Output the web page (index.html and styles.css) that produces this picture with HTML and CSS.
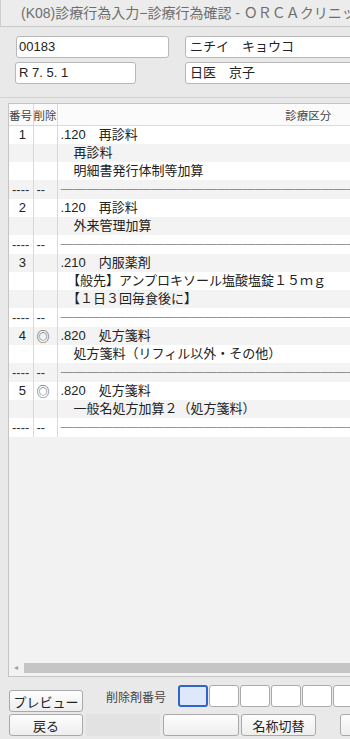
FILE: index.html
```html
<!DOCTYPE html>
<html>
<head>
    <title>診療行為確認</title>
    <link rel="stylesheet" href="styles.css">
</head>
<body>
    <div class="titlebar">(K08)診療行為入力−診療行為確認 - ＯＲＣＡクリニック</div>

    <div class="patient">
        <div class="field field-id">00183</div>
        <div class="field field-wide">ニチイ　キョウコ</div>
        <div class="field field-date">R 7. 5. 1</div>
        <div class="field field-wide">日医　京子</div>
    </div>

    <div class="list-pane">
        <div class="list-scroll">
            <table class="list">
                <colgroup>
                    <col class="c-no">
                    <col class="c-del">
                    <col class="c-body">
                </colgroup>
                <thead>
                    <tr>
                        <th class="h-left">番号</th>
                        <th class="h-left">削除</th>
                        <th>診療区分</th>
                    </tr>
                </thead>
                <tbody>
                    <tr><td class="no">1</td><td></td><td>.120　再診料</td></tr>
                    <tr><td></td><td></td><td>　再診料</td></tr>
                    <tr><td></td><td></td><td>　明細書発行体制等加算</td></tr>
                    <tr class="sep"><td>----</td><td>--</td><td><span class="rule">──────────────────────────────────────</span></td></tr>
                    <tr><td class="no">2</td><td></td><td>.120　再診料</td></tr>
                    <tr><td></td><td></td><td>　外来管理加算</td></tr>
                    <tr class="sep"><td>----</td><td>--</td><td><span class="rule">──────────────────────────────────────</span></td></tr>
                    <tr><td class="no">3</td><td></td><td>.210　内服薬剤</td></tr>
                    <tr><td></td><td></td><td>　【般先】アンプロキソール塩酸塩錠１５ｍｇ</td></tr>
                    <tr><td></td><td></td><td>　【１日３回毎食後に】</td></tr>
                    <tr class="sep"><td>----</td><td>--</td><td><span class="rule">──────────────────────────────────────</span></td></tr>
                    <tr><td class="no">4</td><td class="mark">◎</td><td>.820　処方箋料</td></tr>
                    <tr><td></td><td></td><td>　処方箋料（リフィル以外・その他）</td></tr>
                    <tr class="sep"><td>----</td><td>--</td><td><span class="rule">──────────────────────────────────────</span></td></tr>
                    <tr><td class="no">5</td><td class="mark">◎</td><td>.820　処方箋料</td></tr>
                    <tr><td></td><td></td><td>　一般名処方加算２（処方箋料）</td></tr>
                    <tr class="sep"><td>----</td><td>--</td><td><span class="rule">──────────────────────────────────────</span></td></tr>
                </tbody>
            </table>
        </div>
        <div class="hscroll">
            <span class="hscroll-arrow">◂</span>
            <span class="hscroll-thumb"></span>
        </div>
    </div>

    <div class="actions">
        <div class="action-row">
            <button class="btn btn-preview">プレビュー</button>
            <span class="del-label">削除剤番号</span>
            <div class="del-boxes">
                <div class="del-box active"></div>
                <div class="del-box"></div>
                <div class="del-box"></div>
                <div class="del-box"></div>
                <div class="del-box"></div>
                <div class="del-box"></div>
            </div>
        </div>
        <div class="action-row">
            <button class="btn">戻る</button>
            <div class="btn-blank"></div>
            <button class="btn btn-w76"></button>
            <button class="btn btn-w75">名称切替</button>
            <button class="btn btn-far"></button>
        </div>
    </div>
</body>
</html>
```

FILE: styles.css
```css
html, body {
    margin: 0;
    padding: 0;
}

body {
    width: 350px;
    height: 739px;
    overflow: hidden;
    background-color: #e9e9e9;
    font-family: "Liberation Sans", "Noto Sans CJK JP", sans-serif;
    font-size: 13px;
    color: #222;
}

/* window title */
.titlebar {
    height: 26px;
    line-height: 26px;
    padding-left: 20px;
    border-left: 1px solid #cfcfcf;
    border-bottom: 1px solid #c9c9c9;
    background-color: #ececec;
    color: #6e6e6e;
    font-size: 14px;
    white-space: nowrap;
    overflow: hidden;
}

/* patient info */
.patient {
    display: grid;
    grid-template-columns: 170px 190px;
    row-gap: 4px;
    padding: 9px 0 13px 15px;
    border-bottom: 1px solid #d2d2d2;
}

.field {
    box-sizing: border-box;
    height: 22px;
    line-height: 20px;
    padding-left: 3px;
    background-color: #fff;
    border: 1px solid #b8b8b8;
    border-radius: 3px;
    white-space: nowrap;
    overflow: hidden;
}

.field-id {
    width: 153px;
    margin-left: 1px;
    padding-left: 2px;
}

.field-date {
    width: 121px;
}

.field-wide {
    width: 190px;
    padding-left: 4px;
}

/* list */
.list-pane {
    display: flex;
    flex-direction: column;
    box-sizing: border-box;
    height: 574px;
    margin: 5px 0 0 8px;
    border: 1px solid #c4c4c4;
    border-right: none;
    background-color: #f2f2f2;
    overflow: hidden;
}

.list-scroll {
    flex: 1;
    overflow: hidden;
}

.list {
    table-layout: fixed;
    width: 550px;
    border-collapse: collapse;
}

.c-no { width: 24px; }
.c-del { width: 24px; }
.c-body { width: 502px; }

.list th {
    height: 21px;
    padding: 0;
    background-color: #fbfbfb;
    border-bottom: 1px solid #dadada;
    color: #444;
    font-size: 11.5px;
    font-weight: normal;
    text-align: center;
}

.list th.h-left {
    text-align: left;
    border-right: 1px solid #dadada;
}

.list td {
    height: 18px;
    padding: 0 0 0 3px;
    line-height: 18px;
    white-space: nowrap;
    overflow: hidden;
    vertical-align: middle;
}

.list td:nth-child(1),
.list td:nth-child(2) {
    border-right: 1px solid #d8d8d8;
}

.list tbody tr:nth-child(odd) td {
    background-color: #fff;
}

.list tbody tr:nth-child(even) td {
    background-color: #f3f3f3;
}

.list td.no {
    text-align: center;
}

.list td.mark {
    color: #444;
    font-family: "Noto Sans CJK JP", sans-serif;
    font-size: 13px;
}

.sep td {
    color: #333;
}

.rule {
    font-family: "Noto Sans CJK JP", sans-serif;
    font-weight: bold;
    color: #444;
}

/* horizontal scrollbar */
.hscroll {
    display: flex;
    align-items: center;
    height: 10px;
    margin-bottom: 3px;
}

.hscroll-arrow {
    width: 15px;
    padding-left: 5px;
    box-sizing: border-box;
    color: #a0a0a0;
    font-size: 8px;
    line-height: 10px;
}

.hscroll-thumb {
    flex: 1;
    height: 10px;
    background-color: #c5c5c5;
}

/* bottom buttons */
.actions {
    padding: 8px 0 0 9px;
}

.action-row {
    display: flex;
    align-items: flex-start;
    white-space: nowrap;
}

.action-row + .action-row {
    margin-top: 2px;
}

.btn {
    box-sizing: border-box;
    flex: none;
    width: 74px;
    height: 22px;
    margin: 0 3px 0 0;
    padding: 0;
    border: 1px solid #a9a9a9;
    border-radius: 3px;
    background: linear-gradient(#fdfdfd, #eeeeee);
    font-family: "Liberation Sans", "Noto Sans CJK JP", sans-serif;
    font-size: 13px;
    color: #222;
}

.btn-preview {
    margin-top: 5px;
}

.btn-blank {
    flex: none;
    width: 74px;
    height: 22px;
    margin-right: 3px;
    background-color: #e2e2e2;
}

.btn-w76 {
    width: 76px;
    margin-right: 2px;
}

.btn-w75 {
    width: 75px;
    margin-right: 24px;
}

.del-label {
    flex: none;
    width: 60px;
    margin: 2px 12px 0 20px;
    line-height: 22px;
    font-size: 12px;
    color: #444;
}

.del-boxes {
    display: flex;
    gap: 1px;
}

.del-box {
    box-sizing: border-box;
    flex: none;
    width: 30px;
    height: 22px;
    background-color: #fff;
    border: 1px solid #ababab;
    border-radius: 3px;
}

.del-box.active {
    border: 2px solid #2f66cc;
    background-color: #dde9fa;
}
```
